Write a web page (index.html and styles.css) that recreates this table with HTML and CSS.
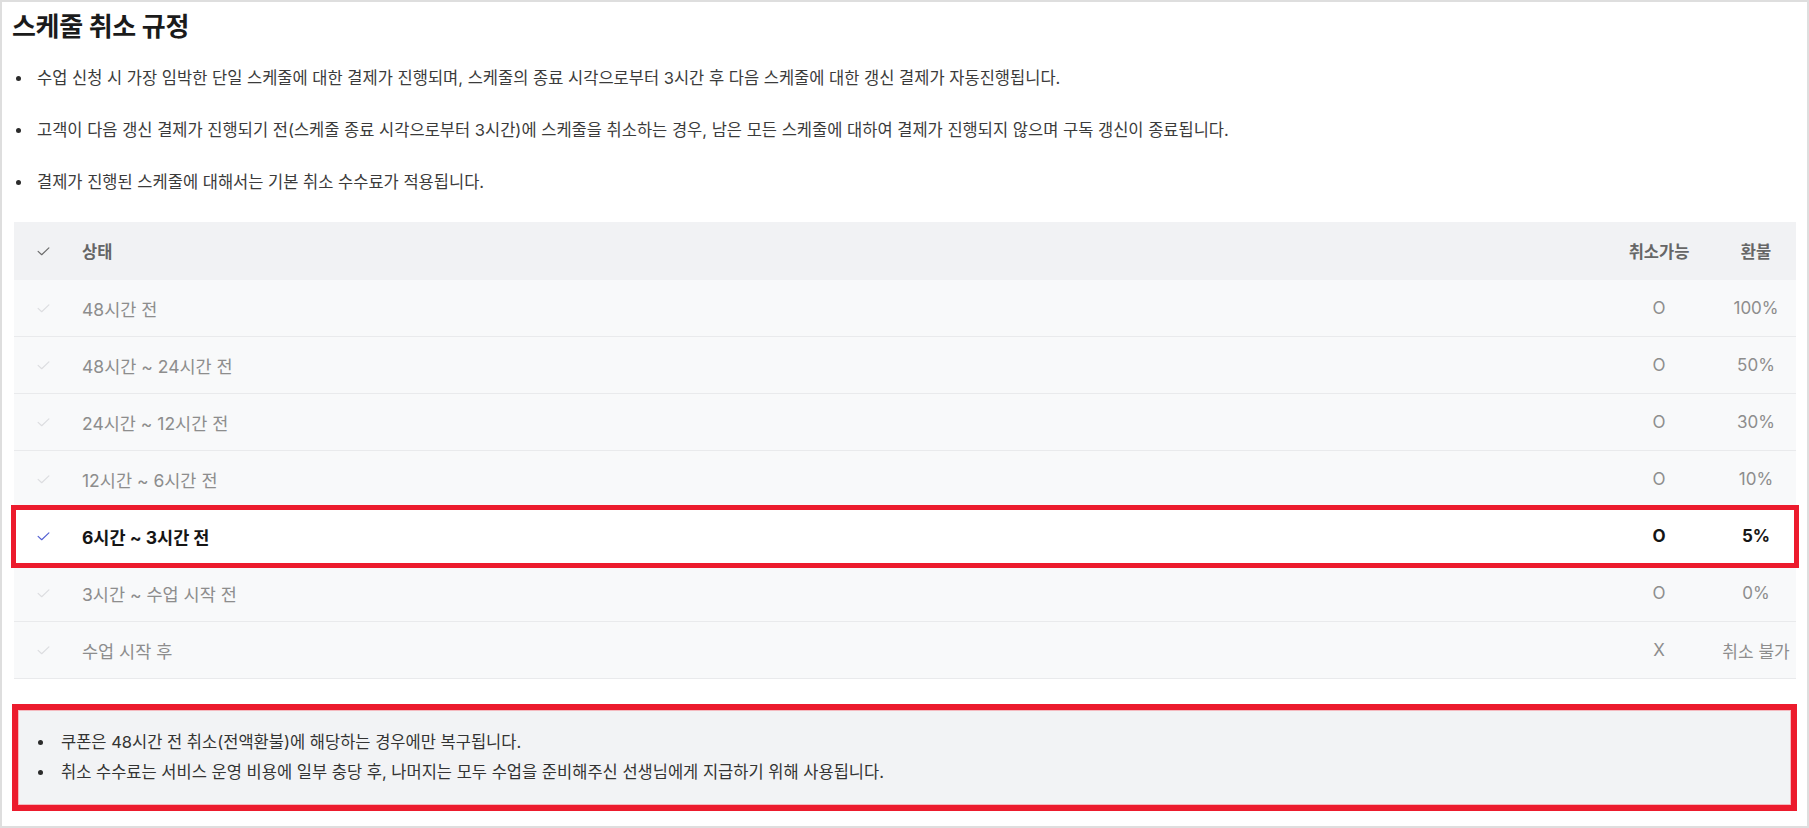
FILE: index.html
```html
<!DOCTYPE html>
<html lang="ko">
<head>
<meta charset="utf-8">
<title>스케줄 취소 규정</title>
<link rel="stylesheet" href="styles.css">
</head>
<body>
<div class="page">
  <h1 class="title">스케줄 취소 규정</h1>
  <ul class="rules">
    <li>수업 신청 시 가장 임박한 단일 스케줄에 대한 결제가 진행되며, 스케줄의 종료 시각으로부터 3시간 후 다음 스케줄에 대한 갱신 결제가 자동진행됩니다.</li>
    <li>고객이 다음 갱신 결제가 진행되기 전(스케줄 종료 시각으로부터 3시간)에 스케줄을 취소하는 경우, 남은 모든 스케줄에 대하여 결제가 진행되지 않으며 구독 갱신이 종료됩니다.</li>
    <li>결제가 진행된 스케줄에 대해서는 기본 취소 수수료가 적용됩니다.</li>
  </ul>

  <div class="table">
    <div class="row head">
      <span class="chk"><svg viewBox="0 0 14 10" width="13" height="9"><path d="M1 4.8 L5 8.6 L13 1" /></svg></span>
      <span class="label">상태</span>
      <span class="c">취소가능</span>
      <span class="c">환불</span>
    </div>
    <div class="row">
      <span class="chk"><svg viewBox="0 0 14 10" width="13" height="9"><path d="M1 4.8 L5 8.6 L13 1" /></svg></span>
      <span class="label">48시간 전</span>
      <span class="c">O</span>
      <span class="c">100%</span>
    </div>
    <div class="row">
      <span class="chk"><svg viewBox="0 0 14 10" width="13" height="9"><path d="M1 4.8 L5 8.6 L13 1" /></svg></span>
      <span class="label">48시간 ~ 24시간 전</span>
      <span class="c">O</span>
      <span class="c">50%</span>
    </div>
    <div class="row">
      <span class="chk"><svg viewBox="0 0 14 10" width="13" height="9"><path d="M1 4.8 L5 8.6 L13 1" /></svg></span>
      <span class="label">24시간 ~ 12시간 전</span>
      <span class="c">O</span>
      <span class="c">30%</span>
    </div>
    <div class="row">
      <span class="chk"><svg viewBox="0 0 14 10" width="13" height="9"><path d="M1 4.8 L5 8.6 L13 1" /></svg></span>
      <span class="label">12시간 ~ 6시간 전</span>
      <span class="c">O</span>
      <span class="c">10%</span>
    </div>
    <div class="row active">
      <span class="chk"><svg viewBox="0 0 14 10" width="13" height="9"><path d="M1 4.8 L5 8.6 L13 1" /></svg></span>
      <span class="label">6시간 ~ 3시간 전</span>
      <span class="c">O</span>
      <span class="c">5%</span>
    </div>
    <div class="row">
      <span class="chk"><svg viewBox="0 0 14 10" width="13" height="9"><path d="M1 4.8 L5 8.6 L13 1" /></svg></span>
      <span class="label">3시간 ~ 수업 시작 전</span>
      <span class="c">O</span>
      <span class="c">0%</span>
    </div>
    <div class="row">
      <span class="chk"><svg viewBox="0 0 14 10" width="13" height="9"><path d="M1 4.8 L5 8.6 L13 1" /></svg></span>
      <span class="label">수업 시작 후</span>
      <span class="c">X</span>
      <span class="c">취소 불가</span>
    </div>
  </div>

  <div class="note">
    <ul class="notes">
      <li>쿠폰은 48시간 전 취소(전액환불)에 해당하는 경우에만 복구됩니다.</li>
      <li>취소 수수료는 서비스 운영 비용에 일부 충당 후, 나머지는 모두 수업을 준비해주신 선생님에게 지급하기 위해 사용됩니다.</li>
    </ul>
  </div>
</div>
</body>
</html>
```
FILE: styles.css
```css
* { box-sizing: border-box; }
html, body { margin: 0; padding: 0; background: #fff; }
body {
  font-family: Inter, "Noto Sans CJK KR", sans-serif;
  color: #333;
}
.page {
  width: 1809px;
  height: 828px;
  border: 2px solid #dedede;
  padding: 0 11px 0 10px;
  overflow: hidden;
}
.title {
  margin: 0;
  padding-top: 8px;
  font-size: 26px;
  line-height: 34px;
  font-weight: 700;
  color: #1b1b1b;
  letter-spacing: -0.3px;
}
.rules {
  list-style: none;
  margin: 22px 0 0 0;
  padding: 0;
  display: flex;
  flex-direction: column;
  gap: 28px;
}
.rules li {
  display: flex;
  align-items: center;
  font-size: 16.5px;
  line-height: 24px;
  color: #3b3b3b;
  letter-spacing: 0;
}
.rules li::before {
  content: "";
  flex: none;
  width: 5px;
  height: 5px;
  border-radius: 50%;
  background: #2b2b2b;
  margin: 0 16px 0 4px;
}
.table {
  margin: 28px 0 0 2px;
}
.row {
  display: grid;
  grid-template-columns: 58px 1fr 114px 80px;
  align-items: center;
  height: 57px;
  background: #f8f9fa;
  border-bottom: 1px solid #e9eaec;
  font-size: 17px;
  color: #8d8d8d;
}
.row.head {
  height: 58px;
  background: #f1f2f4;
  border-bottom: none;
  color: #666;
  font-weight: 600;
  font-size: 16.5px;
}
.chk {
  display: flex;
  justify-content: center;
}
.chk svg path {
  fill: none;
  stroke: #dcdde0;
  stroke-width: 1.3;
  stroke-linecap: round;
  stroke-linejoin: round;
}
.head .chk svg path { stroke: #6b6b6b; }
.label {
  padding-left: 10px;
  font-size: 17.5px;
  letter-spacing: 0;
}
.head .label { font-size: 16.5px; }
.c {
  text-align: center;
}
.row.active {
  background: #fff;
  color: #151515;
  font-weight: 700;
  outline: 5px solid #ec1b2d;
  outline-offset: -2px;
  position: relative;
}
.active .chk svg path { stroke: #5360d3; }
.note {
  margin: 25px -1px 0 0;
  border: 6px solid #ec1b2d;
  background: #f2f3f5;
  height: 107px;
  padding: 17px 0 0 20px;
  box-shadow: inset 0 0 0 1px #f4b9bf;
}
.notes {
  list-style: none;
  margin: 0;
  padding: 0;
}
.notes li {
  display: flex;
  align-items: center;
  font-size: 16.5px;
  line-height: 30px;
  color: #333;
  letter-spacing: 0;
}
.notes li::before {
  content: "";
  flex: none;
  width: 5px;
  height: 5px;
  border-radius: 50%;
  background: #2b2b2b;
  margin-right: 18px;
}
```
